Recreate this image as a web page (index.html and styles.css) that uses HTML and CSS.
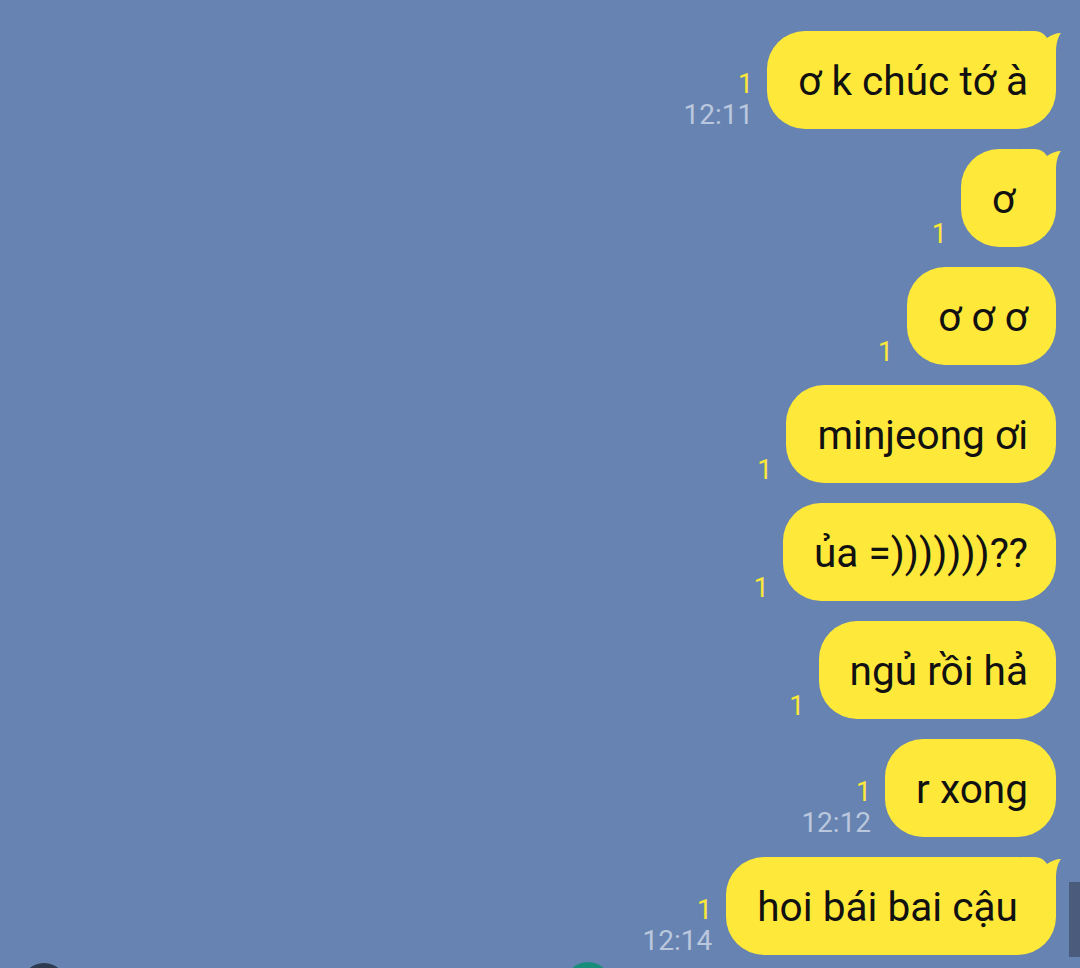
FILE: index.html
```html
<!DOCTYPE html>
<html lang="vi">
<head>
    <meta charset="UTF-8">
    <title>Chat</title>
    <link rel="stylesheet" href="styles.css">
</head>
<body>
    <div class="chat">
        <div class="row">
            <div class="meta"><span class="unread">1</span><span class="time">12:11</span></div>
            <div class="bubble tail">ơ k chúc tớ à
                <svg class="ear" viewBox="0 0 42 40"><path d="M0 0 H14 C22 0 25 4 27 7 C31 4 36 2 41 2 C38 6 36 12 36 22 V40 H0 Z"/></svg>
            </div>
        </div>
        <div class="row">
            <div class="meta"><span class="unread">1</span></div>
            <div class="bubble tail">ơ
                <svg class="ear" viewBox="0 0 42 40"><path d="M0 0 H14 C22 0 25 4 27 7 C31 4 36 2 41 2 C38 6 36 12 36 22 V40 H0 Z"/></svg>
            </div>
        </div>
        <div class="row">
            <div class="meta"><span class="unread">1</span></div>
            <div class="bubble">ơ ơ ơ</div>
        </div>
        <div class="row">
            <div class="meta"><span class="unread">1</span></div>
            <div class="bubble">minjeong ơi</div>
        </div>
        <div class="row">
            <div class="meta"><span class="unread">1</span></div>
            <div class="bubble">ủa =)))))))??</div>
        </div>
        <div class="row">
            <div class="meta"><span class="unread">1</span></div>
            <div class="bubble">ngủ rồi hả</div>
        </div>
        <div class="row">
            <div class="meta"><span class="unread">1</span><span class="time">12:12</span></div>
            <div class="bubble">r xong</div>
        </div>
        <div class="row">
            <div class="meta"><span class="unread">1</span><span class="time">12:14</span></div>
            <div class="bubble tail">hoi bái bai cậu&nbsp;
                <svg class="ear" viewBox="0 0 42 40"><path d="M0 0 H14 C22 0 25 4 27 7 C31 4 36 2 41 2 C38 6 36 12 36 22 V40 H0 Z"/></svg>
            </div>
        </div>
    </div>

    <!-- avatars peeking in from the next screen -->
    <div class="peek dark"></div>
    <div class="peek teal"></div>
    <div class="scrollbar"></div>
</body>
</html>
```

FILE: styles.css
```css
body {
    font-family: 'Roboto', 'Noto Sans', sans-serif;
    background-color: #6783b1;
    margin: 0;
    padding: 0;
    height: 968px;
    overflow: hidden;
    position: relative;
}

.chat {
    display: flex;
    flex-direction: column;
    gap: 20px;
    padding: 31px 24px 0 0;
}

.row {
    display: flex;
    justify-content: flex-end;
    align-items: flex-end;
    gap: 14px;
}

.meta {
    display: flex;
    flex-direction: column;
    align-items: flex-end;
    margin-bottom: -1px;
}

.unread {
    color: #fbe83a;
    font-size: 27px;
    line-height: 32px;
}

.unread:last-child {
    margin-bottom: -2px;
}

.time {
    color: #bac7dd;
    font-size: 28px;
    line-height: 30px;
}

.bubble {
    position: relative;
    background-color: #fee93a;
    color: #111111;
    font-size: 40.6px;
    line-height: 46px;
    padding: 27px 28px 25px 31px;
    min-width: 36px;
    border-radius: 38px;
    white-space: nowrap;
}

.ear {
    position: absolute;
    top: 0;
    right: -6px;
    width: 42px;
    height: 40px;
}

.ear path {
    fill: #fee93a;
}

.peek {
    position: absolute;
    width: 46px;
    height: 46px;
    border-radius: 50%;
}

.peek.dark {
    left: 21px;
    top: 963px;
    background-color: #2e3a50;
}

.peek.teal {
    left: 565px;
    top: 962px;
    background-color: #188d7c;
}

.scrollbar {
    position: absolute;
    right: 0;
    top: 882px;
    width: 11px;
    height: 75px;
    background-color: #4b5b7c;
}
```
